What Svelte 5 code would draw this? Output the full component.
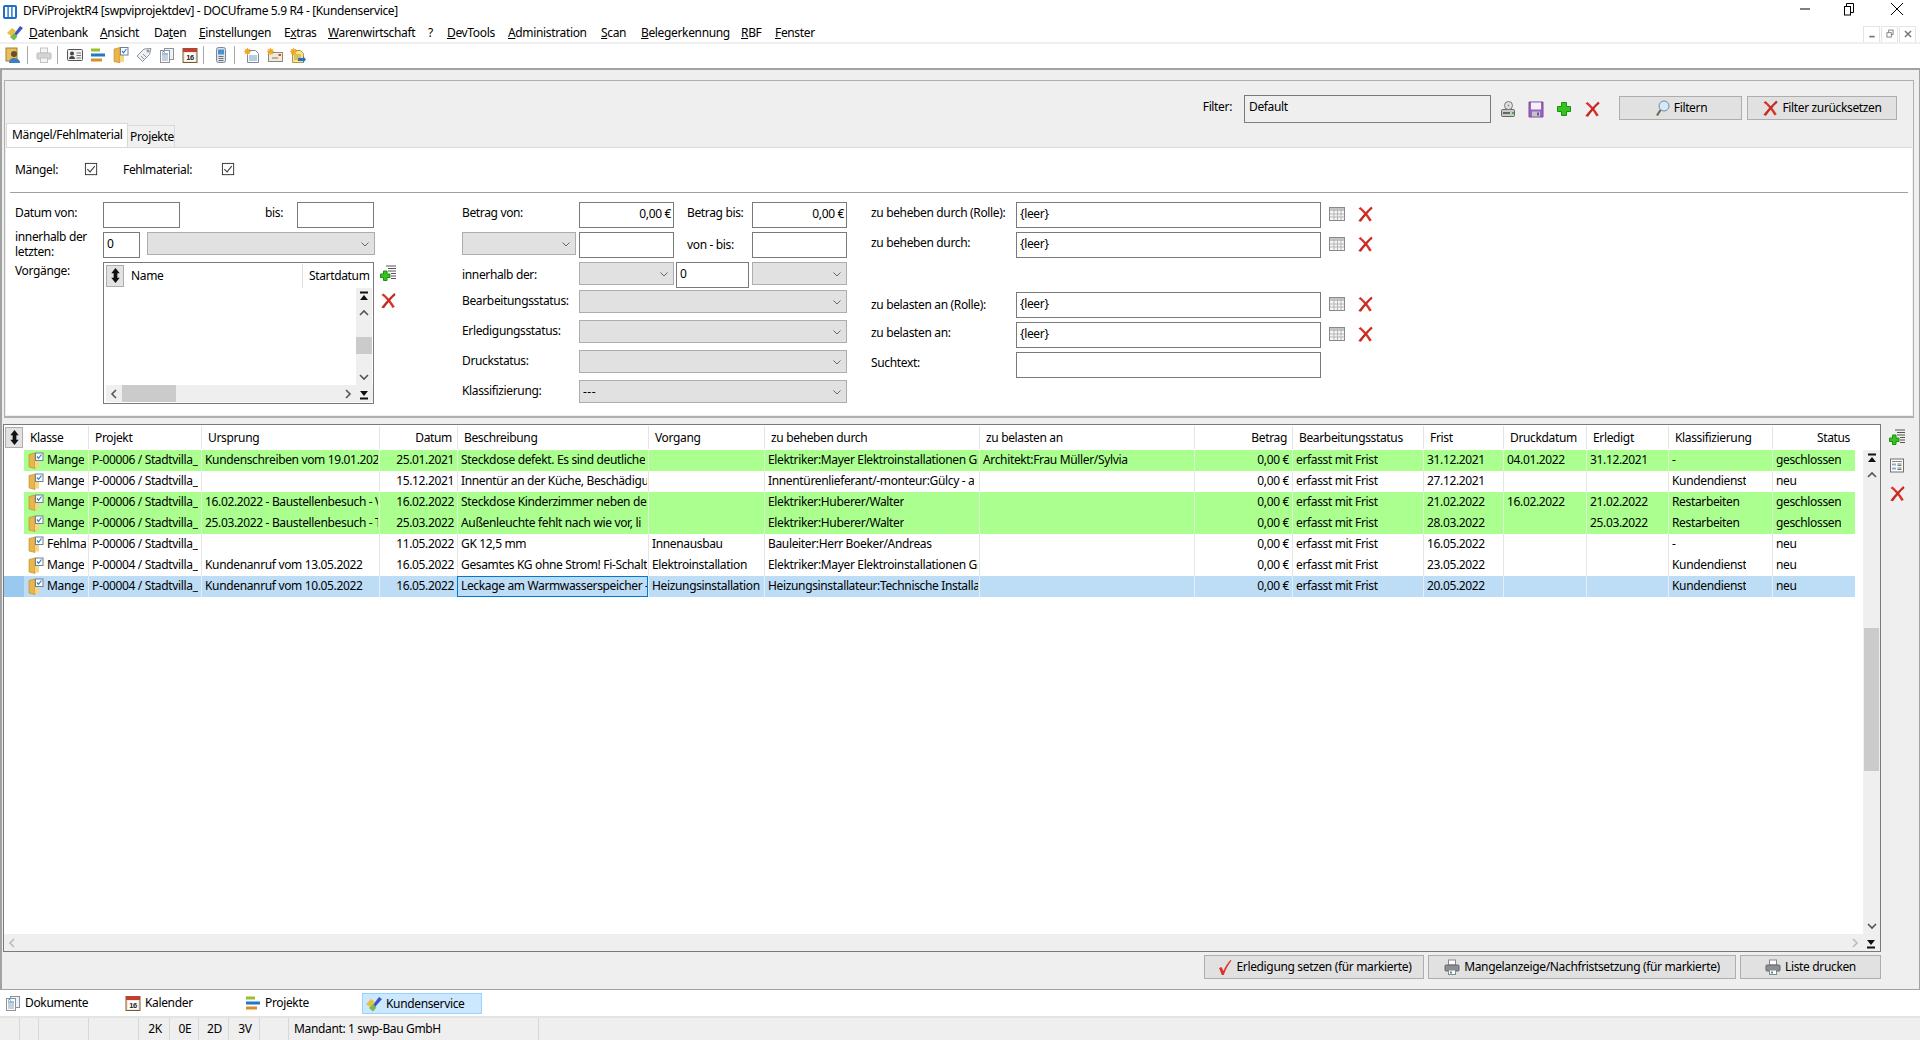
<script>
  const icons = {
    app: '<rect x="1" y="1" width="14" height="14" rx="2" fill="#1f6fc4"/><rect x="3" y="3" width="2.4" height="10" fill="#fff"/><rect x="6.8" y="3" width="2.4" height="10" fill="#fff"/><rect x="10.6" y="3" width="2.4" height="10" fill="#fff"/>',
    logo: '<path d="M0 8l5-5 4 3-5 5z" fill="#e6c23c"/><path d="M7 9l6-8 3 2-7 8z" fill="#3a55c8"/><path d="M3 12l4-4 3.500 3.500-3.500 4z" fill="#7fb84a"/>',
    x: '<path d="M1.500 2.500c3.800 2.500 7.500 7 11 13l2.300-1.200C11.500 9 8 4.800 3.600 1z" fill="#d8342a"/><path d="M14.300 .5C10 4.500 5.500 9.800 1.300 15l2.700.8C7.400 11 11 6.400 15.600 2.400z" fill="#c22b24"/>',
    plus: '<path d="M5.500 1.500h5v4h4v5h-4v4h-5v-4h-4v-5h4z" fill="#35c41e" stroke="#1b8f12"/>',
    addlist: '<path d="M6 .5h10M8 3h8M8 5.500h8M11 8h5M11 10.500h5M11 13h5" stroke="#555"/><path d="M3.500 5.500h3.500v3h3v3.500h-3v3H3.500v-3h-3V8.500h3z" fill="#35c41e" stroke="#1b8f12"/>',
    grid: '<rect x=".5" y="1.500" width="15" height="13" fill="#f5f5f5" stroke="#8a8a8a"/><rect x="1" y="2" width="14" height="3" fill="#c4c4c4"/><path d="M1 8h14M1 11h14M5 3v11M8.500 3v11M12 3v11" stroke="#b5b5b5"/>',
    list: '<rect x="1.500" y="1.500" width="13" height="13" fill="#fbfbfb" stroke="#707070"/><path d="M3 4h10" stroke="#888"/><rect x="3" y="6" width="4" height="2" fill="#8fb0cc"/><rect x="3" y="10" width="4" height="2" fill="#8fb0cc"/><path d="M8.500 6.500h4M8.500 8h4M8.500 10.500h4M8.500 12h4" stroke="#777"/>',
    drive: '<rect x="1.500" y="8.500" width="13" height="7" rx="1" fill="#c9c9c9" stroke="#666"/><rect x="3" y="11" width="7" height="2" fill="#666"/><rect x="12" y="11" width="2" height="2" fill="#46b04a"/><circle cx="8.500" cy="4.500" r="4" fill="#e2e2e2" stroke="#777"/><circle cx="8.500" cy="4.500" r="1" fill="#7a9a7a"/>',
    save: '<path d="M1 1h14v15H1z" fill="#9a63bf" stroke="#7a4aa0"/><rect x="3" y="1.500" width="10" height="7" fill="#f3f0f7"/><rect x="4" y="10.500" width="8" height="5" fill="#c7c2cc"/><rect x="9" y="11.500" width="2" height="3" fill="#6b5a7a"/>',
    lens: '<circle cx="10" cy="6" r="5" fill="#d5e9f8" stroke="#6f8da3"/><path d="M6.500 10L3 15.500" stroke="#7c6a4c" stroke-width="2.200"/>',
    check: '<path d="M2 9l2.500-1 2 4C8 8 10.500 4 13.500 1l1 .5C11 6 8.500 11 6.800 16h-2z" fill="#e0322c"/>',
    print: '<rect x="4.500" y="1" width="7" height="5" fill="#fff" stroke="#888"/><rect x="1" y="6" width="14" height="6" rx="1" fill="#8b8f94" stroke="#666"/><rect x="4.500" y="11" width="7" height="4.500" fill="#fff" stroke="#888"/><rect x="6" y="12.500" width="2" height="2" fill="#2aa0a8"/>',
    printOff: '<rect x="4.500" y="1" width="7" height="5" fill="#f5f5f5" stroke="#c4c4c4"/><rect x="1" y="6" width="14" height="6" rx="1" fill="#d4d4d4" stroke="#bdbdbd"/><rect x="4.500" y="11" width="7" height="4.500" fill="#f5f5f5" stroke="#c4c4c4"/>',
    folder: '<path d="M1 2l6-1.500V16l-6-1.500z" fill="#e9b64a" stroke="#b98a2a" stroke-width=".6"/><rect x="7" y="3" width="4" height="12" fill="#f4d684"/><rect x="7.500" y=".5" width="7.500" height="7.500" fill="#fff" stroke="#6f7f95"/><path d="M9 4l1.500 1.800L13.500 2" stroke="#2a7bd0" fill="none" stroke-width="1.200"/>',
    user: '<rect x="1" y="1" width="11" height="13" fill="#e6bf5c" stroke="#a5802c"/><circle cx="9" cy="7" r="3" fill="#6d4a2a"/><path d="M4 16c0-4 3-5 5-5s6 1 6 5z" fill="#3f7fc0"/>',
    card: '<rect x="0.500" y="2.500" width="15" height="11" rx="1" fill="#f2f2f2" stroke="#555"/><circle cx="5" cy="6.500" r="2" fill="#444"/><path d="M2 12c0-2 1.500-3 3-3s3 1 3 3z" fill="#444"/><path d="M9.500 6h4.500M9.500 8.500h4.500M9.500 11h4.500" stroke="#777"/>',
    gantt: '<rect x="1" y="1.500" width="9" height="3" fill="#9abf2a"/><rect x="1" y="6.500" width="14" height="3" fill="#1f78c8"/><rect x="1" y="11.500" width="11" height="3" fill="#d6902a"/>',
    tag: '<path d="M15 1.500l-7 .5-7 7 5.500 5.500 7-7z" fill="#eef0f2" stroke="#8c949c"/><path d="M5 9l3 3M7 7l3 3" stroke="#8c949c"/><circle cx="12" cy="4" r="1" fill="#fff" stroke="#777"/>',
    doc: '<rect x="5.500" y="1.500" width="9" height="11" fill="#eef1f6" stroke="#8b929c"/><rect x="1.500" y="3.500" width="9" height="12" fill="#fff" stroke="#8b929c"/><path d="M3 7h6" stroke="#3b7fc4"/><path d="M3 9h6M3 11h6M3 13h6" stroke="#8fa2b8"/><path d="M3.500 5.500l1-1.500 1 1.500" stroke="#3b7fc4" fill="none"/>',
    cal: '<rect x="1" y="1.500" width="14" height="14" fill="#f3e9d8" stroke="#7c5a34"/><rect x="1" y="1.500" width="14" height="3.500" fill="#c93a32"/><rect x="3" y="6" width="10" height="8" fill="#fff"/><text x="8" y="13" font-size="7.500" font-weight="700" text-anchor="middle" font-family="Liberation Sans" fill="#222">16</text>',
    phone: '<rect x="3.500" y=".5" width="9" height="15" rx="2" fill="#dfe3e8" stroke="#7b8794"/><rect x="5" y="2.500" width="6" height="5" fill="#4a8fd0"/><path d="M5.500 9.500h5M5.500 11.500h5M5.500 13.500h5" stroke="#6a737c"/>',
    newdoc: '<path d="M3.500 3.500h8l3 3v9h-11z" fill="#fff" stroke="#7f8a96"/><path d="M5 9h8M5 11h8M5 13h8" stroke="#6d9bc8"/><path d="M3.500 .5l1 2 2-1-1 2 2 1-2 1 1 2-2-1-1 2-1-2-2 1 1-2-2-1 2-1-1-2 2 1z" fill="#f0a82a"/>',
    newmail: '<rect x="1.500" y="5.500" width="14" height="9" fill="#f3ead6" stroke="#8a8a7a"/><path d="M5 11h6" stroke="#777"/><rect x="11.500" y="7" width="2.500" height="2" fill="#d44"/><path d="M3.500 .5l1 2 2-1-1 2 2 1-2 1 1 2-2-1-1 2-1-2-2 1 1-2-2-1 2-1-1-2 2 1z" fill="#f0a82a"/>',
    newnote: '<path d="M2.500 3.500h8l3 3v9h-11z" fill="#fbe58c" stroke="#b39a3a"/><path d="M4 8h7M4 10h7M4 12h5" stroke="#b39a3a"/><path d="M8 11h5V9l3 3.500-3 3.500v-2H8z" fill="#2a6fd0"/><path d="M3.500 .5l1 2 2-1-1 2 2 1-2 1 1 2-2-1-1 2-1-2-2 1 1-2-2-1 2-1-1-2 2 1z" fill="#f0a82a"/>',
    sort: '<path d="M8 0l4.500 5.500H10v5h2.500L8 16l-4.500-5.500H6v-5H3.500z" fill="#111"/>',
    up: '<path d="M4 10l4-4 4 4" fill="none" stroke="#555" stroke-width="1.600"/>',
    down: '<path d="M4 6l4 4 4-4" fill="none" stroke="#555" stroke-width="1.600"/>',
    left: '<path d="M10 4l-4 4 4 4" fill="none" stroke="#555" stroke-width="1.600"/>',
    right: '<path d="M6 4l4 4-4 4" fill="none" stroke="#555" stroke-width="1.600"/>',
    leftOff: '<path d="M10 4l-4 4 4 4" fill="none" stroke="#bbb" stroke-width="1.600"/>',
    rightOff: '<path d="M6 4l4 4-4 4" fill="none" stroke="#bbb" stroke-width="1.600"/>',
    top: '<path d="M4 3.500h8" stroke="#111" stroke-width="2"/><path d="M8 6l4 5H4z" fill="#111"/>',
    bottom: '<path d="M4 12.500h8" stroke="#111" stroke-width="2"/><path d="M8 10L4 5h8z" fill="#111"/>',
    chev: '<path d="M4.500 6.500L8 10l3.500-3.500" fill="none" stroke="#666" stroke-width="1"/>',
    tick: '<rect x="1.500" y="1.500" width="12" height="12" fill="#fff" stroke="#333"/><path d="M3.500 7.500l3 3 5-6" fill="none" stroke="#444" stroke-width="1.200"/>',
    min: '<path d="M3 8h10" stroke="#000"/>',
    max: '<path d="M5.500 5.500V2.500h7v9h-3" fill="none" stroke="#000"/><rect x="3.500" y="5.500" width="6" height="8.500" fill="none" stroke="#000"/>',
    close: '<path d="M2 2l12 12M14 2L2 14" stroke="#000"/>',
    mmin: '<path d="M5 11h6" stroke="#777" stroke-width="2"/>',
    mmax: '<rect x="6.500" y="3.500" width="5" height="5" fill="none" stroke="#777"/><rect x="4.500" y="6.500" width="5" height="5" fill="#fff" stroke="#777"/>',
    mclose: '<path d="M4.500 4.500l7 7M11.500 4.500l-7 7" stroke="#777" stroke-width="1.700"/>'
  };

  const menu = [
    [71, 'D', 'atenbank', ''], [54, 'A', 'nsicht', ''], [45, 'Da', 't', 'en', 1], [85, 'E', 'instellungen', ''],
    [44, 'E', 'x', 'tras', 1], [100, 'W', 'arenwirtschaft', ''], [19, '', '?', ''], [61, 'D', 'evTools', ''],
    [93, 'A', 'dministration', ''], [40, 'S', 'can', ''], [100, 'B', 'elegerkennung', ''], [34, 'R', 'BF', ''], [60, 'F', 'enster', '']
  ];

  const columns = [
    ['Klasse', ''], ['Projekt', ''], ['Ursprung', ''], ['Datum', 'r'], ['Beschreibung', ''], ['Vorgang', ''],
    ['zu beheben durch', ''], ['zu belasten an', ''], ['Betrag', 'r'], ['Bearbeitungsstatus', ''], ['Frist', ''],
    ['Druckdatum', ''], ['Erledigt', ''], ['Klassifizierung', ''], ['Status', 'r']
  ];
  const rightCells = [3, 8];

  const rows = [
    { c: 'green', v: ['Mange', 'P-00006 / Stadtvilla_', 'Kundenschreiben vom 19.01.202', '25.01.2021', 'Steckdose defekt. Es sind deutliche', '', 'Elektriker:Mayer Elektroinstallationen Gr', 'Architekt:Frau Müller/Sylvia', '0,00 €', 'erfasst mit Frist', '31.12.2021', '04.01.2022', '31.12.2021', '-', 'geschlossen'] },
    { c: '', v: ['Mange', 'P-00006 / Stadtvilla_', '', '15.12.2021', 'Innentür an der Küche, Beschädigu', '', 'Innentürenlieferant/-monteur:Gülcy - a', '', '0,00 €', 'erfasst mit Frist', '27.12.2021', '', '', 'Kundendienst', 'neu'] },
    { c: 'green', v: ['Mange', 'P-00006 / Stadtvilla_', '16.02.2022 - Baustellenbesuch - V', '16.02.2022', 'Steckdose Kinderzimmer neben der', '', 'Elektriker:Huberer/Walter', '', '0,00 €', 'erfasst mit Frist', '21.02.2022', '16.02.2022', '21.02.2022', 'Restarbeiten', 'geschlossen'] },
    { c: 'green', v: ['Mange', 'P-00006 / Stadtvilla_', '25.03.2022 - Baustellenbesuch - T', '25.03.2022', 'Außenleuchte fehlt nach wie vor, li', '', 'Elektriker:Huberer/Walter', '', '0,00 €', 'erfasst mit Frist', '28.03.2022', '', '25.03.2022', 'Restarbeiten', 'geschlossen'] },
    { c: '', v: ['Fehlma', 'P-00006 / Stadtvilla_', '', '11.05.2022', 'GK 12,5 mm', 'Innenausbau', 'Bauleiter:Herr Boeker/Andreas', '', '0,00 €', 'erfasst mit Frist', '16.05.2022', '', '', '-', 'neu'] },
    { c: '', v: ['Mange', 'P-00004 / Stadtvilla_', 'Kundenanruf vom 13.05.2022', '16.05.2022', 'Gesamtes KG ohne Strom! Fi-Schalt', 'Elektroinstallation', 'Elektriker:Mayer Elektroinstallationen Gr', '', '0,00 €', 'erfasst mit Frist', '23.05.2022', '', '', 'Kundendienst', 'neu'] },
    { c: 'sel', v: ['Mange', 'P-00004 / Stadtvilla_', 'Kundenanruf vom 10.05.2022', '16.05.2022', 'Leckage am Warmwasserspeicher -', 'Heizungsinstallation', 'Heizungsinstallateur:Technische Installa', '', '0,00 €', 'erfasst mit Frist', '20.05.2022', '', '', 'Kundendienst', 'neu'] }
  ];

  const status = [[20, ''], [19, ''], [50, ''], [50, ''], [31, '2K'], [29, '0E'], [30, '2D'], [31, '3V'], [29, ''], [250, 'Mandant: 1 swp-Bau GmbH']];
  const tabs = [['doc', 'Dokumente', false], ['cal', 'Kalender', false], ['gantt', 'Projekte', false], ['logo', 'Kundenservice', true]];
  const pickers = [
    ['zu beheben durch (Rolle):', '{leer}', ''], ['zu beheben durch:', '{leer}', ''], null,
    ['zu belasten an (Rolle):', '{leer}', 'low'], ['zu belasten an:', '{leer}', ''], ['Suchtext:', '', 'none']
  ];
</script>

{#snippet ic(name, cls = '')}
  <svg class="ic {cls}" viewBox="0 0 16 16" aria-hidden="true">{@html icons[name]}</svg>
{/snippet}

{#snippet select(text = '', cls = '')}
  <div class="select {cls}"><span>{text}</span>{@render ic('chev', 'chev')}</div>
{/snippet}

<div class="page">
  <header class="title">
    {@render ic('app', 'appicon')}
    <span class="title-text">DFViProjektR4 [swpviprojektdev] - DOCUframe 5.9 R4 - [Kundenservice]</span>
    <div class="winctl">
      <span>{@render ic('min')}</span><span>{@render ic('max')}</span><span>{@render ic('close')}</span>
    </div>
  </header>

  <nav class="menu">
    {@render ic('logo', 'menu-logo')}
    {#each menu as m}
      <span class="menu-item" style="width:{m[0]}px">
        {#if m[4]}{m[1]}<u>{m[2]}</u>{m[3]}{:else if m[1]}<u>{m[1]}</u>{m[2]}{:else}{m[2]}{/if}
      </span>
    {/each}
    <div class="mdictl">
      <span>{@render ic('mmin')}</span><span>{@render ic('mmax')}</span><span>{@render ic('mclose')}</span>
    </div>
  </nav>

  <div class="toolbar">
    <span class="tool">{@render ic('user')}</span><i class="sep s1"></i>
    <span class="tool">{@render ic('printOff')}</span><i class="sep s2"></i>
    <span class="tool">{@render ic('card')}</span>
    <span class="tool">{@render ic('gantt')}</span>
    <span class="tool">{@render ic('folder')}</span>
    <span class="tool">{@render ic('tag')}</span>
    <span class="tool">{@render ic('doc')}</span>
    <span class="tool">{@render ic('cal')}</span><i class="sep s3"></i>
    <span class="tool">{@render ic('phone')}</span><i class="sep s4"></i>
    <span class="tool">{@render ic('newdoc')}</span>
    <span class="tool">{@render ic('newmail')}</span>
    <span class="tool">{@render ic('newnote')}</span>
  </div>

  <main class="main">
    <section class="filter">
      <div class="filterbar">
        <span class="fl">Filter:</span>
        <div class="input filterinput">Default</div>
        <div class="fbicons">
          {@render ic('drive')}{@render ic('save')}{@render ic('plus')}{@render ic('x')}
        </div>
        <button class="btn b-filter">{@render ic('lens')}Filtern</button>
        <button class="btn b-reset">{@render ic('x')}Filter zurücksetzen</button>
      </div>

      <div class="tabs">
        <span class="tab active">Mängel/Fehlmaterial</span>
        <span class="tab">Projekte</span>
      </div>

      <div class="sheet">
        <div class="checks">
          <span class="c1">Mängel:</span>{@render ic('tick', 'tick')}
          <span class="c2">Fehlmaterial:</span>{@render ic('tick', 'tick')}
        </div>

        <div class="form">
          <div class="fleft">
            <div class="lrow">
              <span class="lb w88">Datum von:</span>
              <div class="input w77"></div>
              <span class="lb bis">bis:</span>
              <div class="input w77"></div>
            </div>
            <div class="lrow">
              <span class="lb w88 two">innerhalb der letzten:</span>
              <div class="input w37">0</div>
              <div class="sp7"></div>
              {@render select('', 'w228')}
            </div>
            <div class="lrow">
              <span class="lb w88 vg">Vorgänge:</span>
              <div class="vlist">
                <div class="vhead">
                  <span class="sortbtn small">{@render ic('sort')}</span>
                  <span class="vname">Name</span>
                  <span class="vstart">Startdatum</span>
                </div>
                <div class="vbody">
                  <div class="vcontent"></div>
                  <div class="vsb">
                    <span class="end">{@render ic('top')}</span>
                    <span class="arr">{@render ic('up')}</span>
                    <div class="track"><div class="thumb vth"></div></div>
                    <span class="arr">{@render ic('down')}</span>
                  </div>
                </div>
                <div class="hsb">
                  <span class="arr">{@render ic('left')}</span>
                  <div class="htrack"><div class="hthumb"></div></div>
                  <span class="arr">{@render ic('right')}</span>
                  <span class="end">{@render ic('bottom')}</span>
                </div>
              </div>
              <div class="vactions">{@render ic('addlist')}{@render ic('x')}</div>
            </div>
          </div>

          <div class="fmid">
            <span class="lb">Betrag von:</span>
            <div class="input w95 r">0,00 €</div>
            <span class="lb bb">Betrag bis:</span>
            <div class="input w95 r">0,00 €</div>

            {@render select('', 'w114')}
            <div class="input w95"></div>
            <span class="lb bb low">von - bis:</span>
            <div class="input w95"></div>

            <span class="lb low">innerhalb der:</span>
            {@render select('', 'w95')}
            <div class="input w73">0</div>
            {@render select('', 'w95')}

            <span class="lb">Bearbeitungsstatus:</span>
            {@render select('', 'span3')}
            <span class="lb">Erledigungsstatus:</span>
            {@render select('', 'span3')}
            <span class="lb">Druckstatus:</span>
            {@render select('', 'span3')}
            <span class="lb">Klassifizierung:</span>
            {@render select('---', 'span3')}
          </div>

          <div class="fright">
            {#each pickers as p}
              {#if p}
                <div class="prow">
                  <span class="lb {p[2]}">{p[0]}</span>
                  <div class="input w305">{p[1]}</div>
                  {#if p[2] !== 'none'}
                    <span class="pi">{@render ic('grid')}</span>
                    <span class="pi">{@render ic('x')}</span>
                  {/if}
                </div>
              {:else}
                <div class="pgap"></div>
              {/if}
            {/each}
          </div>
        </div>
      </div>
    </section>

    <section class="tablewrap">
      <div class="table">
        <div class="tmain">
          <div class="tgrid">
            <div class="tr th">
              <div class="ind"><span class="sortbtn">{@render ic('sort')}</span></div>
              {#each columns as c}
                <div class="hc {c[1]}">{c[0]}</div>
              {/each}
            </div>
            {#each rows as row}
              <div class="tr row {row.c}">
                <div class="ind"></div>
                {#each row.v as v, i}
                  <div class="td" class:r={rightCells.includes(i)} class:first={i === 0} class:focus={row.c === 'sel' && i === 4}>
                    {#if i === 0}{@render ic('folder', 'rowic')}{/if}<span class="clip">{v}</span>
                  </div>
                {/each}
              </div>
            {/each}
          </div>
          <div class="vsb big">
            <span class="end">{@render ic('top')}</span>
            <span class="arr">{@render ic('up')}</span>
            <div class="track"><div class="thumb bth"></div></div>
            <span class="arr">{@render ic('down')}</span>
          </div>
        </div>
        <div class="hsb bigh">
          <span class="arr">{@render ic('leftOff')}</span>
          <div class="htrack"></div>
          <span class="arr">{@render ic('rightOff')}</span>
          <span class="end">{@render ic('bottom')}</span>
        </div>
      </div>
      <div class="side">
        {@render ic('addlist')}{@render ic('list')}{@render ic('x')}
      </div>
    </section>

    <div class="actions">
      <button class="btn a1">{@render ic('check')}Erledigung setzen (für markierte)</button>
      <button class="btn a2">{@render ic('print')}Mangelanzeige/Nachfristsetzung (für markierte)</button>
      <button class="btn a3">{@render ic('print')}Liste drucken</button>
    </div>
  </main>

  <div class="wintabs">
    {#each tabs as t}
      <span class="wintab" class:on={t[2]}>{@render ic(t[0])}{t[1]}</span>
    {/each}
  </div>

  <footer class="status">
    {#each status as s}
      <span class="cell" class:left={s[0] === 250} style="width:{s[0]}px">{s[1]}</span>
    {/each}
  </footer>
</div>

<style>
  :global(body) { margin: 0; background: #fff; overflow: hidden; }
  .page {
    width: 1920px; height: 1040px; display: flex; flex-direction: column; overflow: hidden;
    font: 12px/16px "Noto Sans", "Open Sans", sans-serif; letter-spacing: -0.35px; color: #000; background: #fff;
  }
  .ic { width: 16px; height: 16px; flex: none; display: block; }

  .title { height: 23px; display: flex; align-items: center; flex: none; }
  .appicon { margin: 0 5px 0 2px; }
  .title-text { margin-top: -1px; }
  .winctl { margin-left: auto; display: flex; margin-top: -6px; }
  .winctl span { width: 46px; display: flex; justify-content: center; }
  .winctl span:nth-child(1) { margin-right: -2px; }
  .winctl span:nth-child(2) { margin-right: 2px; }

  .menu { height: 19px; display: flex; align-items: center; flex: none; background: #fff; }
  .menu-logo { margin: 0 6px 0 7px; }
  .menu-item { display: block; white-space: nowrap; }
  .mdictl { margin-left: auto; display: flex; gap: 1px; padding-right: 4px; margin-top: 3px; }
  .mdictl span { width: 17px; height: 17px; border: 1px solid #e4e4e4; box-sizing: border-box; display: flex; align-items: center; justify-content: center; }
  .mdictl svg { width: 14px; height: 14px; }

  .toolbar { height: 26px; flex: none; display: flex; align-items: center; padding: 0 0 2px 1px; border-top: 2px solid #f0f0f0; box-sizing: border-box; }
  .tool { width: 23px; display: flex; justify-content: center; }
  .sep { width: 1px; height: 18px; background: #a8a8a8; }
  .s1 { margin: 0 4px 0 3px; }
  .s2 { margin: 0 5px 0 2px; }
  .s3 { margin: 0 5px 0 2px; }
  .s4 { margin: 0 5px 0 2px; }

  .main {
    height: 922px; flex: none; box-sizing: border-box; background: #efefef;
    border: 2px solid #a2a2a2; border-bottom-width: 1px; border-right-width: 1px;
    display: flex; flex-direction: column;
  }
  .filter {
    width: 1910px; height: 338px; box-sizing: border-box; margin: 10px 0 0 2px;
    border: 1px solid #b0b0b0; border-bottom-width: 2px; display: flex; flex-direction: column;
  }
  .filterbar { height: 42px; flex: none; display: flex; align-items: flex-start; justify-content: flex-end; padding-right: 16px; box-sizing: border-box; }
  .fl { margin: 18px 12px 0 0; }
  .input {
    box-sizing: border-box; height: 26px; border: 1px solid #7a7a7a; background: #fff;
    padding: 1px 3px; line-height: 20px; white-space: nowrap; overflow: hidden;
  }
  .filterinput { width: 247px; height: 28px; margin-top: 14px; background: #efefef; border-bottom-color: #808080; line-height: 20px; padding-left: 4px; }
  .fbicons { display: flex; gap: 12px; margin: 19px 19px 0 9px; }
  .fbicons .ic { width: 16px; height: 18px; }
  .btn {
    box-sizing: border-box; font: inherit; letter-spacing: inherit; color: #000; background: #e1e1e1; border: 1px solid #adadad;
    height: 24px; padding: 0; display: flex; align-items: center; justify-content: center; gap: 4px; white-space: nowrap;
  }
  .b-filter { width: 123px; margin: 15px 5px 0 0; }
  .b-reset { width: 150px; margin-top: 15px; }

  .tabs { height: 24px; flex: none; display: flex; align-items: flex-end; padding-left: 1px; }
  .tab { height: 22px; width: 47px; box-sizing: border-box; border: 1px solid #d9d9d9; border-bottom: 0; border-left: 0; display: block; padding: 3px 0 0 2px; background: #f0f0f0; }
  .tab.active { height: 24px; width: 122px; background: #fff; border-left: 1px solid #d9d9d9; padding: 3px 0 0 5px; }

  .sheet { margin: 0 1px; background: #fff; border-top: 1px solid #d9d9d9; height: 267px; flex: none; display: flex; flex-direction: column; width: 1906px; margin-left: 1px; }
  .checks { height: 45px; margin: 0 4px; flex: none; border-bottom: 1px solid #a0a0a0; display: flex; align-items: center; padding: 0 0 1px 5px; box-sizing: border-box; }
  .c1 { width: 69px; }
  .c2 { width: 98px; margin-left: 24px; }
  .tick { width: 15px; height: 15px; }

  .form { display: flex; padding: 9px 0 0 9px; }
  .lb { padding-top: 3px; display: block; white-space: nowrap; }
  .lb.low { padding-top: 5px; }
  .w88 { width: 88px; flex: none; }
  .w77 { width: 77px; flex: none; }
  .w37 { width: 37px; flex: none; }
  .w95 { width: 95px; }
  .w73 { width: 73px; }
  .w114 { width: 114px; }
  .w228 { width: 228px; }
  .w305 { width: 305px; flex: none; }
  .sp7 { width: 7px; flex: none; }
  .r { text-align: right; padding-right: 2px; }

  .select { box-sizing: border-box; height: 23px; background: #e1e1e1; border: 1px solid #adadad; display: flex; align-items: center; justify-content: space-between; padding-left: 3px; padding-right: 1px; }
  .select span { letter-spacing: 0.5px; }
  .chev { width: 16px; height: 16px; }
  .span3 { grid-column: 2 / span 3; width: 268px; }

  .fleft { width: 447px; flex: none; display: flex; flex-direction: column; }
  .lrow { display: flex; align-items: flex-start; min-height: 30px; }
  .bis { width: 32px; margin-left: 85px; flex: none; }
  .two { padding-top: 0; margin-top: -3px; line-height: 15px; white-space: normal; }
  .vg { padding-top: 1px; }
  .vlist { width: 271px; height: 142px; box-sizing: border-box; border: 1px solid #7a7a7a; display: flex; flex-direction: column; flex: none; background: #fff; }
  .vhead { height: 25px; flex: none; display: flex; align-items: center; position: relative; padding-left: 2px; box-sizing: border-box; }
  .sortbtn { width: 18px; height: 21px; box-sizing: border-box; background: #e2e2e2; border: 1px solid #adadad; display: flex; align-items: center; justify-content: center; }
  .sortbtn .ic { width: 15px; height: 17px; }
  .small { height: 22px; flex: none; }
  .vname { margin-left: 7px; width: 171px; flex: none; height: 16px; border-right: 1px solid #dfdfdf; box-sizing: content-box; padding: 4px 0; }
  .vstart { margin-left: 6px; white-space: nowrap; }
  .vbody { flex: 1; display: flex; min-height: 0; }
  .vcontent { flex: 1; }
  .vsb { width: 16px; margin-right: 1px; background: #efefef; display: flex; flex-direction: column; flex: none; }
  .vsb .end, .vsb .arr { height: 16px; display: flex; justify-content: center; flex: none; align-items: center; }
  .vsb .end { height: 17px; }
  .track { flex: 1; min-height: 0; }
  .thumb { background: #cbcbcb; }
  .vth { height: 17px; margin-top: 16px; }
  .hsb { height: 17px; flex: none; background: #efefef; display: flex; align-items: center; margin: 0 0 1px 2px; padding-right: 1px; }
  .hsb .arr, .hsb .end { width: 16px; display: flex; justify-content: center; flex: none; }
  .htrack { flex: 1; height: 17px; }
  .hthumb { width: 54px; height: 17px; background: #cbcbcb; }
  .vactions { display: flex; flex-direction: column; gap: 10px; margin: 3px 0 0 6px; }
  .vactions .ic { width: 16px; height: 17px; }

  .fmid { width: 409px; flex: none; display: grid; grid-template-columns: 117px 97px 76px 95px; grid-template-rows: 30px 30px 28px 30px 30px 30px 30px; align-items: start; }
  .bb { padding-left: 11px; }

  .fright { display: flex; flex-direction: column; }
  .prow { display: flex; height: 30px; align-items: flex-start; }
  .prow > .lb { width: 145px; flex: none; }
  .pgap { height: 30px; }
  .pi { width: 28px; flex: none; display: flex; justify-content: center; padding-top: 4px; }
  .pi:nth-of-type(2) { margin-left: 2px; }

  .tablewrap { display: flex; margin: 6px 0 0 1px; height: 528px; flex: none; }
  .table { width: 1878px; height: 528px; box-sizing: border-box; border: 1px solid #7a7a7a; background: #fff; display: flex; flex-direction: column; flex: none; }
  .tmain { flex: 1; display: flex; min-height: 0; }
  .tgrid { width: 1859px; flex: none; }
  .tr { display: grid; grid-template-columns: 20px 64px 113px 178px 78px 191px 116px 215px 215px 98px 131px 80px 83px 82px 104px 83px; width: 1851px; }
  .th { height: 25px; }
  .hc { padding: 4px 0 0 6px; border-left: 1px solid #e4e4e4; white-space: nowrap; overflow: hidden; box-sizing: border-box; margin: 1px 0; }
  .ind + .hc { border-left: 0; padding-left: 6px; }
  .hc.r { text-align: right; padding: 4px 5px 0 0; }
  .ind { display: flex; align-items: center; padding-left: 1px; }
  .row { height: 21px; line-height: 19px; }
  .td { padding: 0 1px 0 3px; border-left: 1px solid #e6e6e6; box-sizing: border-box; white-space: nowrap; overflow: hidden; display: flex; }
  .td.first { border-left: 0; padding-left: 4px; gap: 3px; }
  .td.r { justify-content: flex-end; padding: 0 3px 0 0; }
  .rowic { width: 16px; height: 17px; margin-top: 2px; }
  .clip { overflow: hidden; display: block; }
  .green .td { background: #aaff8f; border-left-color: #ddf5d5; }
  .sel .td { background: #bddcf5; border-left-color: #e2eef8; }
  .sel .ind { background: #99c9ef; }
  .td.focus { outline: 1px solid #0078d7; outline-offset: -1px; }

  .big { margin: 25px 0 0; width: 17px; }
  .bth { height: 143px; margin-top: 145px; width: 15px; margin-left: 1px; }
  .bigh { margin: 0; padding-left: 0; padding-right: 1px; }
  .bigh .htrack { flex: 1; }

  .side { display: flex; flex-direction: column; gap: 11px; margin: 5px 0 0 8px; }
  .side .ic { width: 16px; height: 17px; }

  .actions { display: flex; justify-content: flex-end; gap: 4px; margin-top: 3px; width: 1879px; }
  .a1 { width: 220px; }
  .a2 { width: 308px; }
  .a3 { width: 141px; }

  .wintabs { height: 26px; flex: none; display: flex; align-items: center; padding-left: 2px; box-sizing: border-box; padding-top: 1px; }
  .wintab { width: 120px; height: 21px; box-sizing: border-box; display: flex; align-items: center; gap: 4px; padding: 0 0 2px 3px; }
  .wintab.on { background: #cce8ff; border: 1px solid #99d1ff; padding: 0 0 0 3px; }

  .status { height: 24px; flex: none; background: #efefef; border-top: 2px solid #e3e3e3; box-sizing: border-box; display: flex; }
  .cell { box-sizing: border-box; border-right: 1px solid #d8d8d8; display: block; text-align: center; line-height: 22px; flex: none; padding-left: 2px; }
  .cell.left { text-align: left; padding-left: 5px; }
</style>
